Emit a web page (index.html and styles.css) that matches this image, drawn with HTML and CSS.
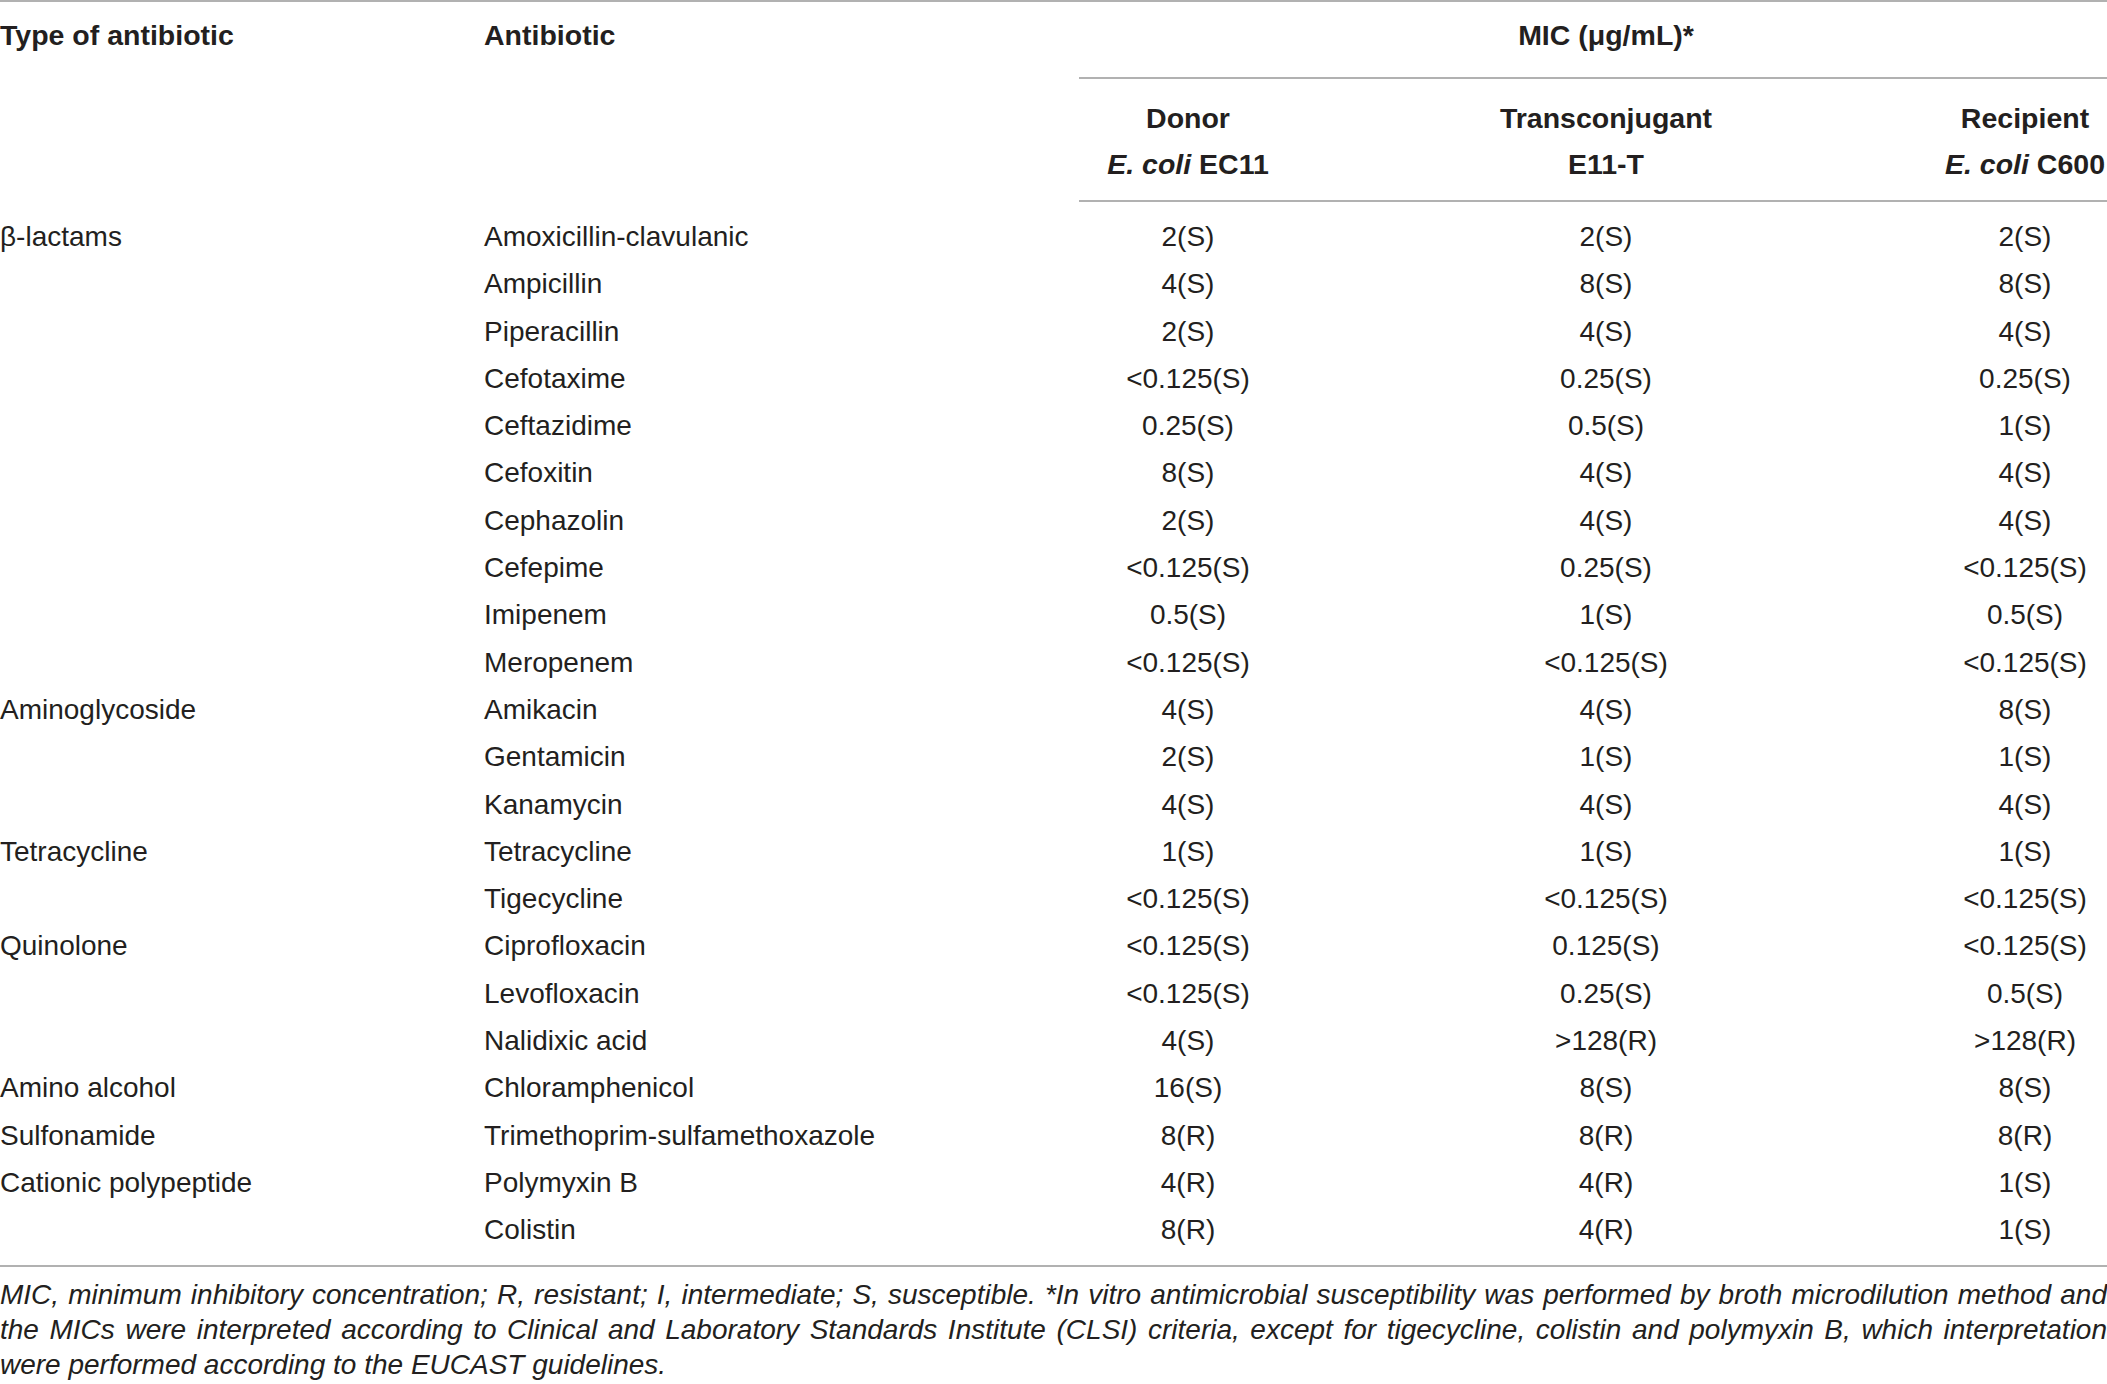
FILE: index.html
```html
<!DOCTYPE html>
<html lang="en">
<head>
  <meta charset="UTF-8" />
  <meta name="viewport" content="width=device-width, initial-scale=1.0"/>
  <title>MIC of E. coli EC11, transconjugant and recipient</title>
  <link rel="stylesheet" href="styles.css">
</head>
<body>

<table id="micTable" class="mic-table">
  <colgroup>
    <col class="col-type">
    <col class="col-drug">
    <col class="col-donor">
    <col class="col-trans">
    <col class="col-recip">
  </colgroup>
  <thead>
    <tr class="head-top">
      <th rowspan="2" class="left">Type of antibiotic</th>
      <th rowspan="2" class="left">Antibiotic</th>
      <th colspan="3" class="mic-head">MIC (μg/mL)*</th>
    </tr>
    <tr class="head-sub">
      <th class="donor">Donor<br><i>E. coli</i> EC11</th>
      <th class="trans">Transconjugant<br>E11-T</th>
      <th>Recipient<br><i>E. coli</i> C600</th>
    </tr>
  </thead>
  <tbody>
    <!-- Filled by JS -->
  </tbody>
</table>

<p class="footnote">MIC, minimum inhibitory concentration; R, resistant; I, intermediate; S, susceptible. *In vitro antimicrobial susceptibility was performed by broth microdilution method and the MICs were interpreted according to Clinical and Laboratory Standards Institute (CLSI) criteria, except for tigecycline, colistin and polymyxin B, which interpretation were performed according to the EUCAST guidelines.</p>

<script>
  const tableBody = document.querySelector("#micTable tbody");

  const groups = [
    ["β-lactams", [
      ["Amoxicillin-clavulanic", "2(S)", "2(S)", "2(S)"],
      ["Ampicillin", "4(S)", "8(S)", "8(S)"],
      ["Piperacillin", "2(S)", "4(S)", "4(S)"],
      ["Cefotaxime", "<0.125(S)", "0.25(S)", "0.25(S)"],
      ["Ceftazidime", "0.25(S)", "0.5(S)", "1(S)"],
      ["Cefoxitin", "8(S)", "4(S)", "4(S)"],
      ["Cephazolin", "2(S)", "4(S)", "4(S)"],
      ["Cefepime", "<0.125(S)", "0.25(S)", "<0.125(S)"],
      ["Imipenem", "0.5(S)", "1(S)", "0.5(S)"],
      ["Meropenem", "<0.125(S)", "<0.125(S)", "<0.125(S)"]
    ]],
    ["Aminoglycoside", [
      ["Amikacin", "4(S)", "4(S)", "8(S)"],
      ["Gentamicin", "2(S)", "1(S)", "1(S)"],
      ["Kanamycin", "4(S)", "4(S)", "4(S)"]
    ]],
    ["Tetracycline", [
      ["Tetracycline", "1(S)", "1(S)", "1(S)"],
      ["Tigecycline", "<0.125(S)", "<0.125(S)", "<0.125(S)"]
    ]],
    ["Quinolone", [
      ["Ciprofloxacin", "<0.125(S)", "0.125(S)", "<0.125(S)"],
      ["Levofloxacin", "<0.125(S)", "0.25(S)", "0.5(S)"],
      ["Nalidixic acid", "4(S)", ">128(R)", ">128(R)"]
    ]],
    ["Amino alcohol", [
      ["Chloramphenicol", "16(S)", "8(S)", "8(S)"]
    ]],
    ["Sulfonamide", [
      ["Trimethoprim-sulfamethoxazole", "8(R)", "8(R)", "8(R)"]
    ]],
    ["Cationic polypeptide", [
      ["Polymyxin B", "4(R)", "4(R)", "1(S)"],
      ["Colistin", "8(R)", "4(R)", "1(S)"]
    ]]
  ];

  function renderTable() {
    tableBody.innerHTML = "";
    groups.forEach(([type, drugs]) => {
      drugs.forEach((d, i) => {
        const row = document.createElement("tr");
        const typeCell = document.createElement("td");
        typeCell.className = "left";
        typeCell.textContent = i === 0 ? type : "";
        row.appendChild(typeCell);

        d.forEach((val, j) => {
          const cell = document.createElement("td");
          cell.textContent = val;
          if (j === 0) cell.className = "left";
          if (j === 1) cell.className = "donor";
          if (j === 2) cell.className = "trans";
          row.appendChild(cell);
        });
        tableBody.appendChild(row);
      });
    });
  }

  renderTable();
</script>

</body>
</html>
```

FILE: styles.css
```css
body {
  font-family: "Liberation Sans", Arial, sans-serif;
  color: #231f20;
  background-color: #fff;
  margin: 0;
}

.mic-table {
  width: 2107px;
  table-layout: fixed;
  border-collapse: collapse;
  font-size: 28px;
}

.col-type { width: 484px; }
.col-drug { width: 595px; }
.col-donor { width: 218px; }
.col-trans { width: 646px; }
.col-recip { width: 164px; }

th, td {
  padding: 0;
  text-align: center;
  white-space: nowrap;
}

th {
  font-size: 28.5px;
  font-weight: bold;
  line-height: 46px;
  vertical-align: top;
}

.left {
  text-align: left;
}

.trans {
  padding-right: 28px;
}

thead .head-top th {
  border-top: 2px solid #b1b1b1;
  padding-top: 10px;
}

.mic-head {
  padding-left: 26px;
  padding-bottom: 19px;
  border-bottom: 2px solid #b1b1b1;
}

.head-sub th {
  padding-top: 16px;
  padding-bottom: 13px;
  border-bottom: 2px solid #b1b1b1;
}

.head-sub th.trans {
  padding-right: 28px;
}

td {
  line-height: 47.3px;
  font-weight: normal;
}

tbody tr:first-child td {
  padding-top: 11px;
}

tbody tr:last-child td {
  padding-bottom: 11px;
  border-bottom: 2px solid #b1b1b1;
}

.footnote {
  margin: 10px 0 0;
  font-size: 28px;
  font-style: italic;
  line-height: 35px;
  text-align: justify;
}
```
